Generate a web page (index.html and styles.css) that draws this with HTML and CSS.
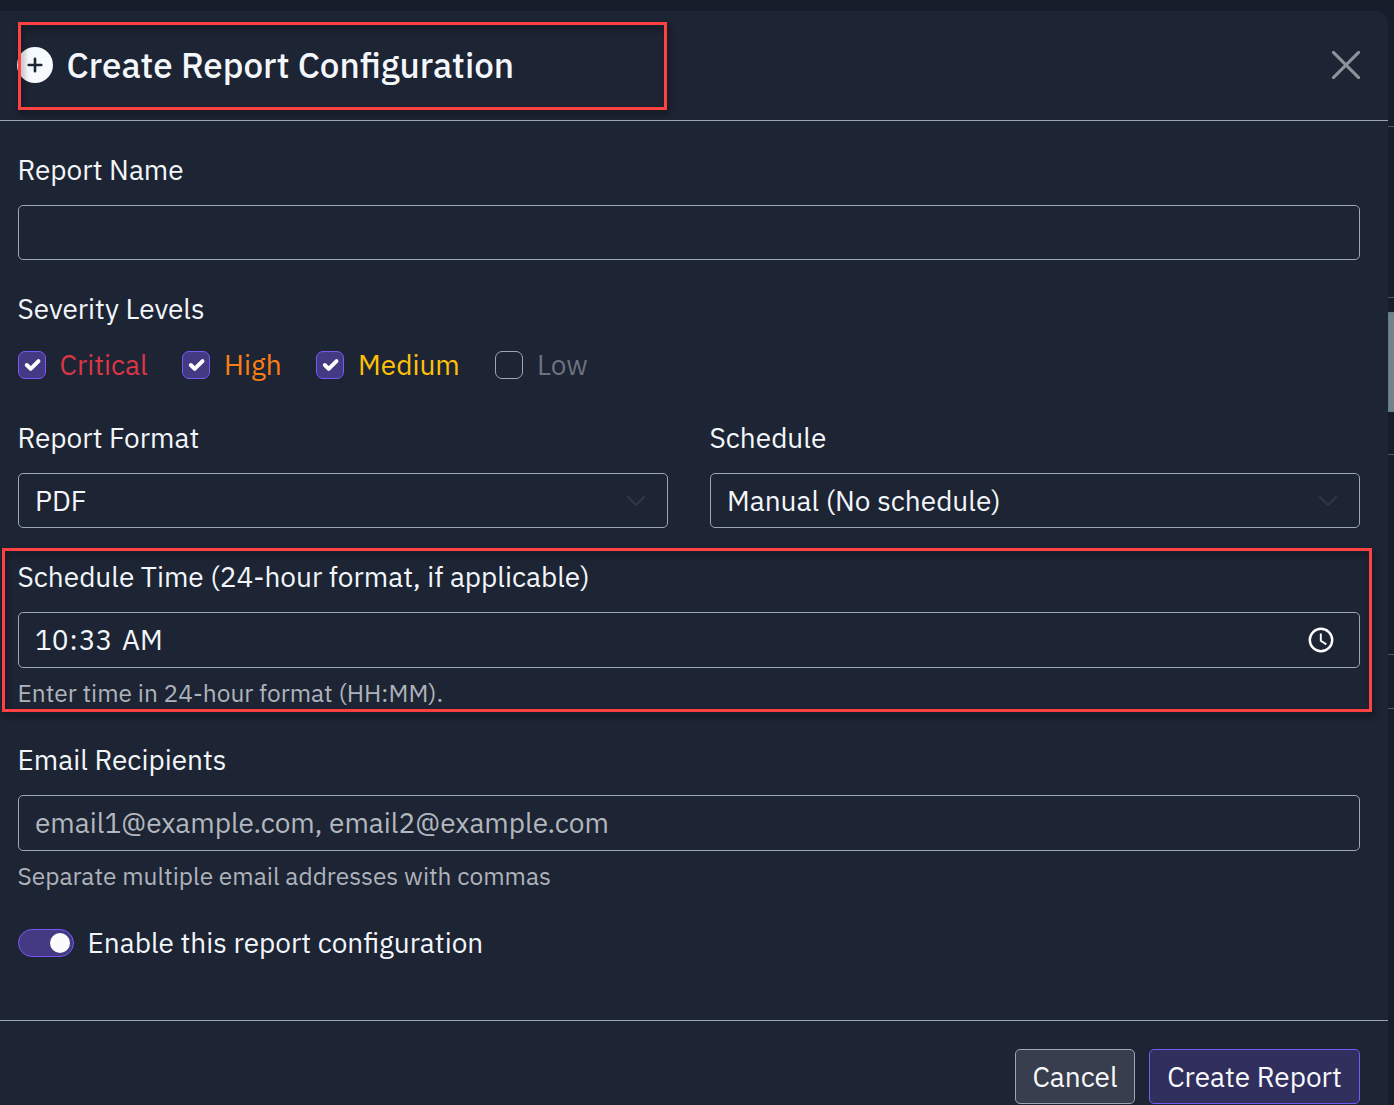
FILE: index.html
```html
<!DOCTYPE html>
<html lang="en">
<head>
<meta charset="utf-8">
<title>Create Report Configuration</title>
<link rel="stylesheet" href="styles.css">
</head>
<body>
<div class="backdrop">
  <i class="rule rule-1"></i><i class="rule rule-2"></i><i class="rule rule-3"></i><i class="rule rule-4"></i><i class="rule rule-5"></i>
  <i class="scroll-thumb"></i>
</div>
<main class="modal">
  <header class="modal-header">
    <svg class="plus-icon" viewBox="0 0 36 36"><circle cx="18" cy="18" r="18" fill="#f6f9fd"/><path d="M18 11.700v12.600M11.700 18h12.600" stroke="#1d2433" stroke-width="2.600" stroke-linecap="round"/></svg>
    <h1 class="title">Create Report Configuration</h1>
    <svg class="close-icon" viewBox="0 0 28 28"><path d="M1.400 1.400l25.200 25.200M26.600 1.400L1.400 26.600" stroke="#8f929b" stroke-width="3" stroke-linecap="round"/></svg>
  </header>
  <form class="modal-body">
    <section class="field">
      <label class="label">Report Name</label>
      <div class="control short"></div>
    </section>
    <section class="field severity">
      <label class="label">Severity Levels</label>
      <div class="checks">
        <label class="check critical"><span class="box on"><svg viewBox="0 0 20 20"><path d="M6 10l3 3 6-6" /></svg></span><span>Critical</span></label>
        <label class="check high"><span class="box on"><svg viewBox="0 0 20 20"><path d="M6 10l3 3 6-6" /></svg></span><span>High</span></label>
        <label class="check medium"><span class="box on"><svg viewBox="0 0 20 20"><path d="M6 10l3 3 6-6" /></svg></span><span>Medium</span></label>
        <label class="check low"><span class="box"></span><span>Low</span></label>
      </div>
    </section>
    <div class="columns">
      <section class="field">
        <label class="label">Report Format</label>
        <div class="control short"><span>PDF</span><svg class="chevron" viewBox="0 0 20 12"><path d="M2 2l8 8 8-8"/></svg></div>
      </section>
      <section class="field">
        <label class="label">Schedule</label>
        <div class="control short"><span>Manual (No schedule)</span><svg class="chevron" viewBox="0 0 20 12"><path d="M2 2l8 8 8-8"/></svg></div>
      </section>
    </div>
    <section class="field">
      <label class="label">Schedule Time (24-hour format, if applicable)</label>
      <div class="control"><span class="time-value"><span class="hours">10</span>:<span class="minutes">33</span> AM</span><svg class="clock" viewBox="0 0 26 26"><circle cx="13" cy="13" r="11.200" stroke-width="2.400"/><path d="M12.800 6.500v7.300l5.500 3.600" stroke-width="1.900"/></svg></div>
      <p class="help">Enter time in 24-hour format (HH:MM).</p>
    </section>
    <section class="field">
      <label class="label">Email Recipients</label>
      <div class="control placeholder"><span>email1@example.com, email2@example.com</span></div>
      <p class="help">Separate multiple email addresses with commas</p>
    </section>
    <label class="enable"><span class="switch"><i class="knob"></i></span><span>Enable this report configuration</span></label>
  </form>
  <footer class="modal-footer">
    <button class="btn cancel">Cancel</button>
    <button class="btn primary">Create Report</button>
  </footer>
</main>
<div class="highlight highlight-title"></div>
<div class="highlight highlight-time"></div>
</body>
</html>
```
FILE: styles.css
```css
* { box-sizing: border-box; }
body {
  margin: 0;
  height: 1105px;
  overflow: hidden;
  position: relative;
  background: #171d2b;
  color: #f3f6fa;
  font: 28px/42px "IBM Plex Sans", Roboto, sans-serif;
  padding-top: 11px;
}
svg { display: block; flex: none; fill: none; }
.backdrop { position: absolute; top: 0; right: 0; width: 6px; height: 1105px; }
.rule { position: absolute; left: 0; width: 6px; height: 1px; background: #4f5968; }
.rule-1 { top: 126px; }
.rule-2 { top: 297px; }
.rule-3 { top: 454px; }
.rule-4 { top: 654px; }
.rule-5 { top: 708px; }
.scroll-thumb { position: absolute; left: 0; top: 312px; width: 6px; height: 100px; background: #71838d; border: 1px solid #5f7e86; border-right: 0; }
.modal {
  position: relative;
  width: 1388px;
  height: 1110px;
  background: #1d2433;
  border-top-right-radius: 13px;
}
.modal-header {
  display: flex;
  align-items: center;
  height: 110px;
  padding: 0 28px 2px 17px;
  border-bottom: 1px solid #9ba6b7;
}
.plus-icon { width: 36px; height: 36px; }
.title { flex: 1; margin: 0 0 0 13.6px; font-size: 35px; font-weight: 500; line-height: 52px; }
.close-icon { width: 28px; height: 28px; }
.modal-body { padding: 28px 28px 0 17.5px; height: 899px; }
.field { margin-bottom: 28px; }
.severity { margin-bottom: 31px; }
.label { display: block; width: max-content; margin-bottom: 14px; white-space: nowrap; }
.control {
  display: flex;
  align-items: center;
  justify-content: space-between;
  height: 56px;
  padding: 0 21px 0 16.5px;
  border: 1px solid #9ba6b7;
  border-radius: 5px;
  white-space: nowrap;
}
.short { height: 55px; }
.placeholder { color: #b2b6be; }
.chevron { width: 20px; height: 12px; stroke: #303748; stroke-width: 2.2; stroke-linecap: round; stroke-linejoin: round; }
.time-value { word-spacing: 3px; }
.hours { padding-right: 1px; }
.minutes { padding: 0 0 0 1px; }
.clock { width: 26px; height: 26px; margin: 0 4px 1px 0; stroke: #fff; }
.help { margin: 7px 0 0; height: 36px; width: max-content; color: #aeb3bb; font-size: 24.5px; line-height: 36px; }
.checks { display: flex; height: 42px; }
.check { display: flex; align-items: center; gap: 14px; white-space: nowrap; }
.critical { width: 164px; color: #dc3545; }
.high { width: 134px; gap: 14.6px; color: #fd7e14; }
.medium { width: 179px; gap: 14.6px; color: #ffc107; }
.low { gap: 14.4px; color: #6c727f; }
.box { flex: none; width: 28px; height: 28px; border: 1px solid #9ba6b7; border-radius: 7px; }
.on { background: #433a83; border-color: #7759f5; }
.on path { stroke: #fff; stroke-width: 3; stroke-linecap: round; stroke-linejoin: round; }
.columns { display: grid; grid-template-columns: 650px 650px; gap: 42px; }
.enable { display: flex; align-items: center; gap: 14px; }
.switch { display: flex; align-items: center; justify-content: flex-end; width: 56px; height: 28px; padding-right: 3px; border: 1px solid #7759f5; border-radius: 14px; background: #433a83; }
.knob { width: 20px; height: 20px; border-radius: 50%; background: #fbfbfc; }
.modal-footer { display: flex; justify-content: flex-end; gap: 14px; padding: 28px 28px 0; border-top: 1px solid #9ba6b7; }
.btn { height: 55px; padding: 0; border: 1px solid #9ba6b7; border-radius: 5px; color: #f8f9fb; font: inherit; white-space: nowrap; }
.cancel { width: 120px; background: #383e4e; }
.primary { width: 211px; background: #302f5d; border-color: #7759f5; }
.highlight { position: absolute; border: 3px solid #ff4141; filter: drop-shadow(2px 4px 3px rgba(0, 0, 0, .5)); }
.highlight-title { left: 18px; top: 22px; width: 649px; height: 88px; }
.highlight-time { left: 2px; top: 548px; width: 1370px; height: 164px; }
```
